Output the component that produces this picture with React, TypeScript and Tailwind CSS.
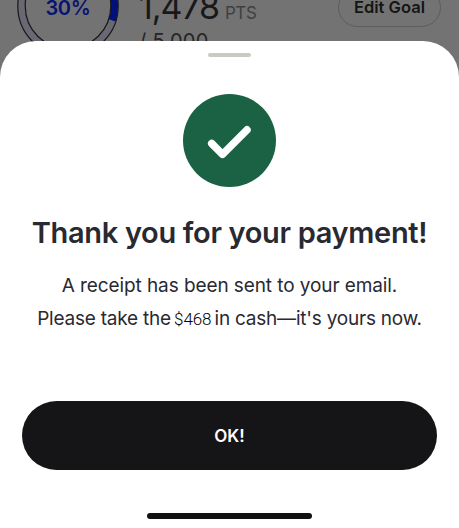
function ProgressRing() {
  return (
    <div className="relative h-[102px] w-[102px] shrink-0">
      <svg className="h-full w-full" viewBox="0 0 102 102" fill="none">
        <circle cx="51" cy="51" r="46.5" stroke="#696974" strokeWidth="7" />
        <circle
          cx="51"
          cy="51"
          r="46.5"
          stroke="#00107c"
          strokeWidth="7"
          pathLength="100"
          strokeDasharray="30 70"
          transform="rotate(-90 51 51)"
        />
        <circle cx="51" cy="51" r="50.2" stroke="#18181b" strokeWidth="1.2" />
        <circle cx="51" cy="51" r="42.8" stroke="#18181b" strokeWidth="1.2" />
      </svg>
      <span className="absolute inset-0 flex items-center justify-center pt-[3px] text-[20px] font-semibold tracking-[-0.3px] text-[#081475]">
        30%
      </span>
    </div>
  )
}

function GoalSummary() {
  return (
    <div className="flex h-[102px] -translate-y-[45px] pl-[17px]">
      <ProgressRing />
      <div className="ml-[20px] w-[200px] pt-[37px] whitespace-nowrap">
        <div className="flex items-baseline gap-[6px] leading-[30px]">
          <span className="text-[34px] tracking-[-1.1px] text-[#18181b]">1,478</span>
          <span className="text-[17px] tracking-[-0.4px] text-[#3f3f43]">PTS</span>
        </div>
        <div className="mt-px text-[20px] leading-[24px] tracking-[0.3px] text-[#252528]">/ 5,000</div>
      </div>
      <button className="mt-[33px] -ml-px h-[39px] w-[103px] shrink-0 rounded-full border border-[#5d5d5d] text-[16.5px] font-semibold whitespace-nowrap text-[#151516]">
        Edit Goal
      </button>
    </div>
  )
}

function PaymentSheet() {
  return (
    <div className="absolute inset-x-0 top-[41px] bottom-0 flex flex-col items-center rounded-t-[36px] bg-white">
      <div className="mt-[12px] h-[4px] w-[43px] shrink-0 rounded-full bg-[#cbc9c4]" />
      <div className="mt-[37px] h-[93px] w-[93px] shrink-0 rounded-full bg-[#1b6144]">
        <svg viewBox="0 0 93 93" fill="none">
          <path d="M28.7 49.5 39.5 60.3 64 35.8" stroke="#fff" strokeWidth="7.5" strokeLinecap="round" strokeLinejoin="round" />
        </svg>
      </div>
      <h1 className="mt-[28px] text-[29px] leading-[36px] font-semibold tracking-[-0.33px] whitespace-nowrap text-[#292931]">
        Thank you for your payment!
      </h1>
      <p className="mt-[18px] text-center text-[19px] leading-[33px] whitespace-nowrap text-[#292931]">
        <span className="block tracking-[-0.09px]">A receipt has been sent to your email.</span>
        <span className="block tracking-[-0.22px]">
          Please take the <span className="-mx-[2px] font-[Roboto] text-[17px] font-[350] tracking-[-0.1px] text-black">$468</span> in
          cash—it's yours now.
        </span>
      </p>
      <button className="mt-[65px] h-[69px] w-[415px] shrink-0 rounded-full bg-[#151517] pt-[2px] text-[17px] font-semibold text-white">
        OK!
      </button>
      <div className="mt-[43px] h-[6px] w-[165px] shrink-0 rounded-full bg-[#111113]" />
    </div>
  )
}

export default function App() {
  return (
    <div className="relative h-[528px] w-[459px] overflow-hidden bg-[#737373] font-[Inter,sans-serif]">
      <GoalSummary />
      <PaymentSheet />
    </div>
  )
}
